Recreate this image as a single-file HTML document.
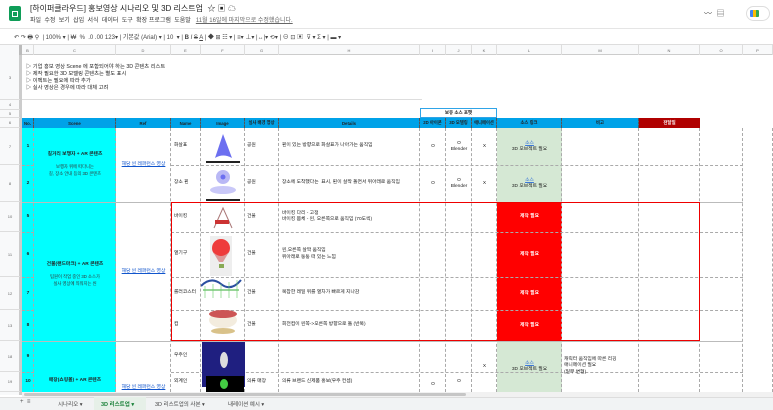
<!DOCTYPE html>
<html><head><meta charset="utf-8">
<style>
*{margin:0;padding:0;box-sizing:border-box}
body{width:773px;height:410px;overflow:hidden;background:#fff;font-family:"Liberation Sans","Noto Sans CJK KR",sans-serif;position:relative;color:#222}
.a{position:absolute}
.t{font-size:5px;white-space:nowrap}
.c{display:flex;align-items:center;justify-content:center;text-align:center}
.v{border-right:1px dashed #aaa}
.h{border-bottom:1px dashed #aaa}
.hdr{background:#00a2e8;font-size:5px;font-weight:bold;color:#000}
.link{color:#1155cc;text-decoration:underline}
</style></head><body>
<!-- top bar -->
<div class="a" style="left:9px;top:6px;width:12px;height:15px;background:#0f9d58;border-radius:2px"></div>
<div class="a" style="left:12px;top:11px;width:6px;height:6px;border:1px solid #fff"></div>
<div class="a t" style="left:30px;top:3px;font-size:8px;color:#222">[하이퍼클라우드] 홍보영상 시나리오 및 3D 리스트업 &nbsp;☆ ▣ ☁</div>
<div class="a t" style="left:30px;top:15px;font-size:6px;color:#333">파일 &nbsp;수정 &nbsp;보기 &nbsp;삽입 &nbsp;서식 &nbsp;데이터 &nbsp;도구 &nbsp;확장 프로그램 &nbsp;도움말 &nbsp;&nbsp;<span style="text-decoration:underline;color:#666">11월 16일에 마지막으로 수정했습니다.</span></div>
<div class="a t" style="left:704px;top:8px;font-size:8px;color:#555">〰 &nbsp;▤</div>
<div class="a" style="left:746px;top:6px;width:24px;height:15px;border:1px solid #ddd;border-radius:8px"></div>
<div class="a" style="left:750px;top:10px;width:9px;height:7px;background:linear-gradient(90deg,#4285f4 33%,#fbbc04 33% 66%,#34a853 66%);border-radius:1px"></div>
<div class="a" style="left:0;top:28px;width:773px;height:1px;background:#e5e5e5"></div>
<div class="a t" style="left:14px;top:32px;font-size:6px;color:#444">↶ ↷ 🖶 ⚲ &nbsp;| 100% ▾ | ₩ &nbsp;% &nbsp;.0 .00 123▾ | 기본값 (Arial) ▾ | 10 &nbsp;▾ | <b>B</b> <i>I</i> <s>S</s> <u>A</u> | ◆ ⊞ ☷ ▾ | ≡▾ ⊥▾ |↔|▾ ⟲▾ | ⊖ ⊡ ▣ &nbsp;⊽ ▾ Σ ▾ | ▬ ▾</div>
<div class="a" style="left:0;top:44px;width:773px;height:1px;background:#ddd"></div>
<!-- column headers -->
<div class="a" style="left:0;top:45px;width:773px;height:10px;background:#f8f9fa;border-bottom:1px solid #ccc"></div>
<div class="a" style="left:0;top:45px;width:22px;height:10px;background:#f8f9fa;border-right:3px solid #bbb"></div>
<div class="a" style="left:0;top:55px;width:20px;height:340px;background:#f8f9fa;border-right:1px solid #ccc"></div>
<div class="a" style="left:20px;top:55px;width:2px;height:340px;background:#ccc"></div>
<div id="colh"></div>
<!-- row 3 text -->
<div class="a t" style="left:26px;top:64px;font-size:5.3px;line-height:7px;color:#222">▷ 기업 홍보 영상 Scene 에 포함되어야 하는 3D 콘텐츠 리스트<br>▷ 제작 필요한 3D 모델링 콘텐츠는 별도 표시<br>▷ 이펙트는 필요에 따라 추가<br>▷ 실사 영상은 경우에 따라 대체 고려</div>
<div class="a" style="left:22px;top:99px;width:400px;height:1px;background:#ddd"></div>
<div class="a" style="left:420px;top:108px;width:77px;height:10px;border:1px solid #2fa4e7;font-size:4.5px;font-weight:bold" ><div class="c" style="height:100%">보유 소스 포맷</div></div>
<!-- table header row 6 -->
<div class="a hdr" style="left:22px;top:118px;width:617px;height:10px"></div>
<div class="a" style="left:639px;top:118px;width:61px;height:10px;background:#b00000;color:#fff;font-size:4.5px;font-weight:bold"><div class="c" style="height:100%">전달일</div></div>
<div id="hdrs"></div>
<!-- cyan -->
<div class="a" style="left:22px;top:128px;width:94px;height:264px;background:#00ffff"></div>
<!-- green cells -->
<div class="a" style="left:497px;top:128px;width:65px;height:74px;background:#d5e8d4"></div>
<div class="a" style="left:497px;top:341px;width:65px;height:51px;background:#d5e8d4"></div>
<!-- red cells -->
<div class="a" style="left:497px;top:202px;width:65px;height:139px;background:#ff0000"></div>
<div id="grid"></div>
<div class="a" style="left:171px;top:202px;width:529px;height:139px;border:1.5px solid #e00"></div>
<!-- texts -->
<div id="txt"></div>
<!-- images -->
<svg class="a" style="left:201px;top:128px" width="44" height="264">
<path d="M14 30 L22 6 L31 30 Q22 25 14 30Z" fill="#6c6ff0"/><rect x="5" y="33" width="34" height="2" fill="#222"/>
<circle cx="22" cy="49" r="7" fill="#b9b8f5"/><circle cx="22" cy="49" r="2.5" fill="#6c6ff0"/><ellipse cx="22" cy="62" rx="13" ry="4" fill="#c9c8f8"/><rect x="5" y="71" width="34" height="2" fill="#222"/>
<path d="M13 100 L22 80 L31 100" stroke="#a77" fill="none"/><rect x="14" y="92" width="14" height="4" fill="#c33"/>
<rect x="9" y="108" width="22" height="40" fill="#eee"/><circle cx="20" cy="120" r="9" fill="#ee3b3b"/><path d="M12 124 Q20 132 28 124 L22 134 L18 134Z" fill="#d99"/><rect x="18" y="136" width="5" height="4" fill="#8a5"/>
<path d="M0 158 Q10 148 20 156 T40 152" stroke="#2a4fa0" stroke-width="2" fill="none"/><path d="M2 162 L38 162" stroke="#3a3" stroke-width="1"/><path d="M4 158 V170 M12 156 V170 M20 156 V170 M28 154 V170 M36 152 V170" stroke="#6c6" stroke-width=".6"/>
<ellipse cx="22" cy="192" rx="14" ry="8" fill="#f3ecde"/><ellipse cx="22" cy="186" rx="14" ry="4" fill="#c55"/><ellipse cx="22" cy="203" rx="12" ry="3" fill="#d9c28a"/>
<rect x="1" y="214" width="43" height="45" fill="#1f1f80"/><ellipse cx="23" cy="232" rx="4" ry="8" fill="#ddd"/>
<rect x="5" y="248" width="38" height="16" fill="#000"/><ellipse cx="23" cy="256" rx="4" ry="5" fill="#4c4"/>
</svg>
<!-- scrollbar and tabs -->
<div class="a" style="left:22px;top:392px;width:751px;height:5px;background:#f1f1f1"></div>
<div class="a" style="left:24px;top:393px;width:442px;height:3px;background:#c6c6c6;border-radius:2px"></div>
<div class="a" style="left:0;top:397px;width:773px;height:13px;background:#f1f3f4;border-top:1px solid #ddd"></div>
<div class="a t" style="left:20px;top:399px;font-size:6px;color:#555">+ &nbsp;≡</div>
<div class="a t" style="left:58px;top:400px;font-size:5.5px;color:#444">시나리오 ▾</div>
<div class="a" style="left:94px;top:397px;width:52px;height:13px;background:#e6f0e8"></div>
<div class="a t" style="left:101px;top:400px;font-size:5.5px;color:#188038;font-weight:bold">3D 리스트업 ▾</div>
<div class="a t" style="left:155px;top:400px;font-size:5.5px;color:#444">3D 리스트업의 사본 ▾</div>
<div class="a t" style="left:228px;top:400px;font-size:5.5px;color:#444">내레이션 예시 ▾</div>
<script>
const cols=[22,34,116,171,201,245,279,420,446,472,497,562,639,700,743,773];
const names=['B','C','D','E','F','G','H','I','J','K','L','M','N','O','P'];
let s='';
for(let i=0;i<names.length;i++){s+=`<div class="a" style="left:${cols[i]}px;top:45px;width:${cols[i+1]-cols[i]}px;height:10px;border-right:1px solid #ddd;font-size:4px;color:#666"><div class="c" style="height:100%">${names[i]}</div></div>`}
const rows=[[55,100,'3'],[100,110,'4'],[110,118,'5'],[118,128,'6'],[128,165,'7'],[165,202,'8'],[202,232,'10'],[232,277,'11'],[277,310,'12'],[310,341,'13'],[341,372,'18'],[372,392,'19']];
for(const r of rows){s+=`<div class="a" style="left:0;top:${r[0]}px;width:20px;height:${r[1]-r[0]}px;border-bottom:1px solid #ddd;font-size:4px;color:#666"><div class="c" style="height:100%">${r[2]}</div></div>`}
document.getElementById('colh').innerHTML=s;
const hd=['No.','Scene','Ref','Name','Image','실사 배경 영상','Details','2D 아이콘','3D 모델링','애니메이션','소스 링크','비고'];
s='';for(let i=0;i<hd.length;i++){s+=`<div class="a" style="left:${cols[i]}px;top:118px;width:${cols[i+1]-cols[i]}px;height:10px;border-right:1px dashed #555;font-size:4.3px;font-weight:bold"><div class="c" style="height:100%">${hd[i]}</div></div>`}
document.getElementById('hdrs').innerHTML=s;
// grid lines
s='';
for(let i=0;i<cols.length-1;i++){s+=`<div class="a" style="left:${cols[i+1]-1}px;top:128px;width:0;height:264px;border-left:1px dashed #aaa"></div>`}
const rl=[165,202,232,277,310,341,372];
for(const y of rl){
 if(y==202||y==341){s+=`<div class="a" style="left:22px;top:${y}px;width:721px;border-top:1px solid #bbb"></div>`}
 else s+=`<div class="a" style="left:22px;top:${y}px;width:12px;border-top:1px dashed #aaa"></div><div class="a" style="left:171px;top:${y}px;width:572px;border-top:1px dashed #aaa"></div>`;
}
document.getElementById('grid').innerHTML=s;
function T(x,y,w,h,html,st=''){return `<div class="a c" style="left:${x}px;top:${y}px;width:${w}px;height:${h}px;font-size:4.8px;line-height:6px;${st}"><div>${html}</div></div>`}
function L(x,y,h,html,st=''){return `<div class="a" style="left:${x}px;top:${y}px;height:${h}px;display:flex;align-items:center;font-size:4.8px;line-height:6.5px;white-space:nowrap;${st}"><div>${html}</div></div>`}
s='';
const nums=[[128,165,'1'],[165,202,'2'],[202,232,'5'],[232,277,'6'],[277,310,'7'],[310,341,'8'],[341,372,'9'],[372,392,'10']];
for(const n of nums)s+=T(22,n[0],12,n[1]-n[0],n[2],'font-weight:bold');
s+=T(34,140,82,50,'<b>길거리 보행자 + AR 콘텐츠</b><br><br><span style="font-size:4.3px;color:#333">보행자 위에 떠다니는<br>길, 장소 안내 등의 3D 콘텐츠</span>');
s+=T(34,250,82,50,'<b>건물(랜드마크) + AR 콘텐츠</b><br><br><span style="font-size:4.3px;color:#333">팀원이 작업 중인 3D 소스가<br>실사 영상에 띄워지는 씬</span>');
s+=T(34,375,82,12,'<b>매장(쇼핑몰) + AR 콘텐츠</b>');
s+=T(116,155,55,20,'<span class="link">해당 씬 레퍼런스 영상</span>');
s+=T(116,262,55,20,'<span class="link">해당 씬 레퍼런스 영상</span>');
s+=T(116,384,55,8,'<span class="link">해당 씬 레퍼런스 영상</span>');
const nm=[[128,165,'화살표'],[165,202,'장소 핀'],[202,232,'바이킹'],[232,277,'열기구'],[277,310,'롤러코스터'],[310,341,'컵'],[341,372,'우주인'],[372,392,'외계인']];
for(const n of nm)s+=L(174,n[0],n[1]-n[0],n[2]);
const g=[[128,165,'공원'],[165,202,'공원'],[202,232,'건물'],[232,277,'건물'],[277,310,'건물'],[310,341,'건물'],[372,392,'의류 매장']];
for(const n of g)s+=L(247,n[0],n[1]-n[0],n[2]);
const d=[[128,165,'핀이 있는 방향으로 화살표가 나아가는 움직임'],[165,202,'장소에 도착했다는 &nbsp;표시, 핀이 살짝 돌면서 위아래로 움직임'],[202,232,'바이킹 다리 - 고정<br>바이킹 몸체 - 왼, 오른쪽으로 움직임 (70도씩)'],[232,277,'왼,오른쪽 살짝 움직임<br>위아래로 둥둥 떠 있는 느낌'],[277,310,'복잡한 레일 위를 열차가 빠르게 지나감'],[310,341,'회전컵이 왼쪽->오른쪽 방향으로 돎 (반복)'],[372,392,'의류 브랜드 신제품 홍보(우주 컨셉)']];
for(const n of d)s+=L(282,n[0],n[1]-n[0],n[2]);
for(const y of [128,165]){s+=T(420,y,26,37,'O');s+=T(446,y,26,37,'O<br>Blender');s+=T(472,y,25,37,'X');s+=T(497,y,65,37,'<span class="link" style="color:#3c78d8">소스</span><br>3D 오브젝트 필요')}
for(const n of [[202,232],[232,277],[277,310],[310,341]])s+=T(497,n[0],65,n[1]-n[0],'제작 필요','color:#fff;font-weight:bold');
s+=T(472,341,25,51,'X');s+=T(420,372,26,20,'<br>O');s+=T(446,372,26,20,'O');
s+=T(497,341,65,51,'<span class="link" style="color:#3c78d8">소스</span><br>3D 오브젝트 필요');
s+=L(564,341,51,'캐릭터 움직임에 따른 리깅<br>애니메이션 필요<br>(일부 변형)');
document.getElementById('txt').innerHTML=s;
</script>
</body></html>
